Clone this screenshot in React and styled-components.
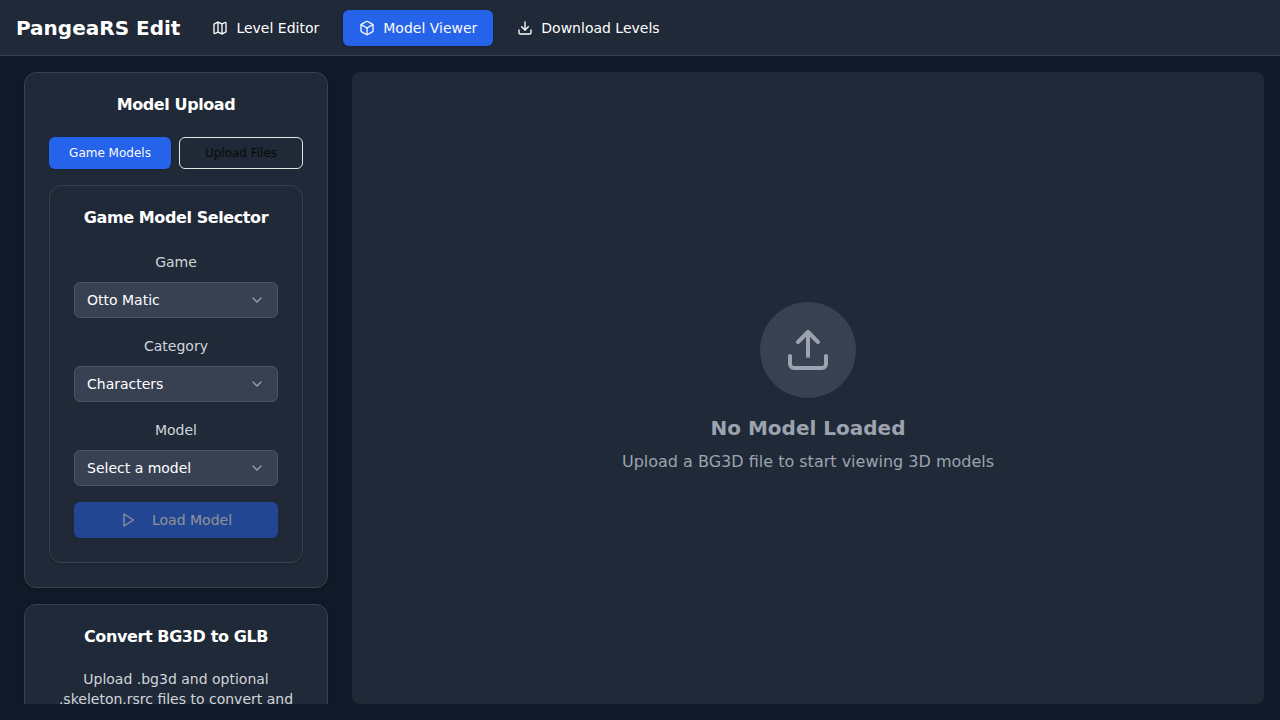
import React from "react";
import styled, { createGlobalStyle, css } from "styled-components";
import { Map, Box, Download, Upload, ChevronDown } from "lucide-react";

const GlobalStyle = createGlobalStyle`
  *, *::before, *::after { box-sizing: border-box; }
  html, body, #root { height: 100%; }
  body {
    margin: 0;
    background: #111827;
    color: #fff;
    font-family: "DejaVu Sans", sans-serif;
    font-size: 16px;
    line-height: 24px;
  }
  h1, h2, h3, p { margin: 0; }
  button { font-family: inherit; cursor: pointer; }
`;

const Page = styled.div`
  display: flex;
  flex-direction: column;
  height: 100vh;
  overflow: hidden;
`;

const Header = styled.header`
  display: flex;
  align-items: center;
  gap: 16px;
  flex: none;
  height: 56px;
  padding: 0 16px;
  background: #1f2937;
  border-bottom: 1px solid #374151;
`;

const Brand = styled.h1`
  font-size: 20px;
  line-height: 28px;
  font-weight: 700;
`;

const Nav = styled.nav`
  display: flex;
  gap: 8px;
`;

const Button = styled.button`
  display: inline-flex;
  align-items: center;
  justify-content: center;
  gap: 8px;
  height: 36px;
  padding: 0 16px;
  border: 0;
  border-radius: 6px;
  background: transparent;
  color: #fff;
  font-size: 14px;
  line-height: 20px;
  font-weight: 500;
  white-space: nowrap;

  svg { width: 16px; height: 16px; flex: none; }

  ${({ $primary }) => $primary && css`
    background: #2563eb;
    color: #fafafa;
    box-shadow: 0 1px 3px rgba(0, 0, 0, 0.1), 0 1px 2px -1px rgba(0, 0, 0, 0.1);
  `}
`;

const TabButton = styled(Button)`
  flex: 1;
  height: 32px;
  padding: 0 12px;
  font-size: 12px;
  line-height: 16px;

  ${({ $primary }) => !$primary && css`
    border: 1px solid #e5e5e5;
    color: #0a0a0a;
    box-shadow: 0 1px 2px rgba(0, 0, 0, 0.05);
  `}
`;

const LoadButton = styled(Button)`
  width: 100%;
  opacity: 0.5;

  svg { margin-right: 8px; }
`;

const Main = styled.main`
  display: flex;
  gap: 16px;
  flex: 1;
  min-height: 0;
  padding: 16px;
`;

const Sidebar = styled.aside`
  display: flex;
  flex-direction: column;
  gap: 16px;
  flex: none;
  width: 320px;
  padding: 0 8px;
  overflow: hidden;
`;

const Card = styled.section`
  flex: none;
  padding: 24px;
  background: #1f2937;
  border: 1px solid #374151;
  border-radius: 12px;
  box-shadow: 0 1px 3px rgba(0, 0, 0, 0.1), 0 1px 2px -1px rgba(0, 0, 0, 0.1);
  text-align: center;
`;

const CardTitle = styled.h3`
  margin-bottom: 24px;
  font-size: 16px;
  line-height: 16px;
  font-weight: 600;
  letter-spacing: -0.4px;
`;

const Stack = styled.div`
  display: flex;
  flex-direction: column;
  gap: 16px;
`;

const Tabs = styled.div`
  display: flex;
  gap: 8px;
`;

const Label = styled.label`
  color: #d1d5db;
  font-size: 14px;
  line-height: 20px;
`;

const Select = styled.button`
  display: flex;
  align-items: center;
  justify-content: space-between;
  width: 100%;
  height: 36px;
  margin-top: 8px;
  padding: 0 12px;
  background: #374151;
  border: 1px solid #4b5563;
  border-radius: 6px;
  box-shadow: 0 1px 2px rgba(0, 0, 0, 0.05);
  color: #fff;
  font-size: 14px;
  line-height: 20px;

  svg { width: 16px; height: 16px; opacity: 0.5; }
`;

const Description = styled.p`
  color: #d1d5db;
  font-size: 14px;
  line-height: 20px;
`;

const Viewer = styled.section`
  display: flex;
  flex: 1;
  flex-direction: column;
  align-items: center;
  justify-content: center;
  background: #1f2937;
  border-radius: 8px;
  color: #9ca3af;
`;

const EmptyIcon = styled.div`
  display: flex;
  align-items: center;
  justify-content: center;
  width: 96px;
  height: 96px;
  margin-bottom: 16px;
  border-radius: 50%;
  background: #374151;
`;

const EmptyTitle = styled.h3`
  margin-bottom: 8px;
  font-size: 20px;
  line-height: 28px;
  font-weight: 600;
`;

const PlayIcon = () => (
  <svg viewBox="0 0 24 24" fill="none" stroke="currentColor" strokeWidth="2" strokeLinecap="round" strokeLinejoin="round">
    <polygon points="6 3 20 12 6 21 6 3" />
  </svg>
);

const Field = ({ label, value }) => (
  <div>
    <div><Label>{label}</Label></div>
    <Select type="button">
      <span>{value}</span>
      <ChevronDown />
    </Select>
  </div>
);

export default function App() {
  return (
    <Page>
      <GlobalStyle />
      <Header>
        <Brand>PangeaRS Edit</Brand>
        <Nav>
          <Button><Map />Level Editor</Button>
          <Button $primary><Box />Model Viewer</Button>
          <Button><Download />Download Levels</Button>
        </Nav>
      </Header>
      <Main>
        <Sidebar>
          <Card>
            <CardTitle>Model Upload</CardTitle>
            <Stack>
              <Tabs>
                <TabButton $primary>Game Models</TabButton>
                <TabButton>Upload Files</TabButton>
              </Tabs>
              <Card>
                <CardTitle>Game Model Selector</CardTitle>
                <Stack>
                  <Field label="Game" value="Otto Matic" />
                  <Field label="Category" value="Characters" />
                  <Field label="Model" value="Select a model" />
                  <LoadButton $primary disabled><PlayIcon />Load Model</LoadButton>
                </Stack>
              </Card>
            </Stack>
          </Card>
          <Card>
            <CardTitle>Convert BG3D to GLB</CardTitle>
            <Description>
              Upload .bg3d and optional .skeleton.rsrc files to convert and download as GLB.
            </Description>
          </Card>
        </Sidebar>
        <Viewer>
          <EmptyIcon><Upload size={48} /></EmptyIcon>
          <EmptyTitle>No Model Loaded</EmptyTitle>
          <p>Upload a BG3D file to start viewing 3D models</p>
        </Viewer>
      </Main>
    </Page>
  );
}
